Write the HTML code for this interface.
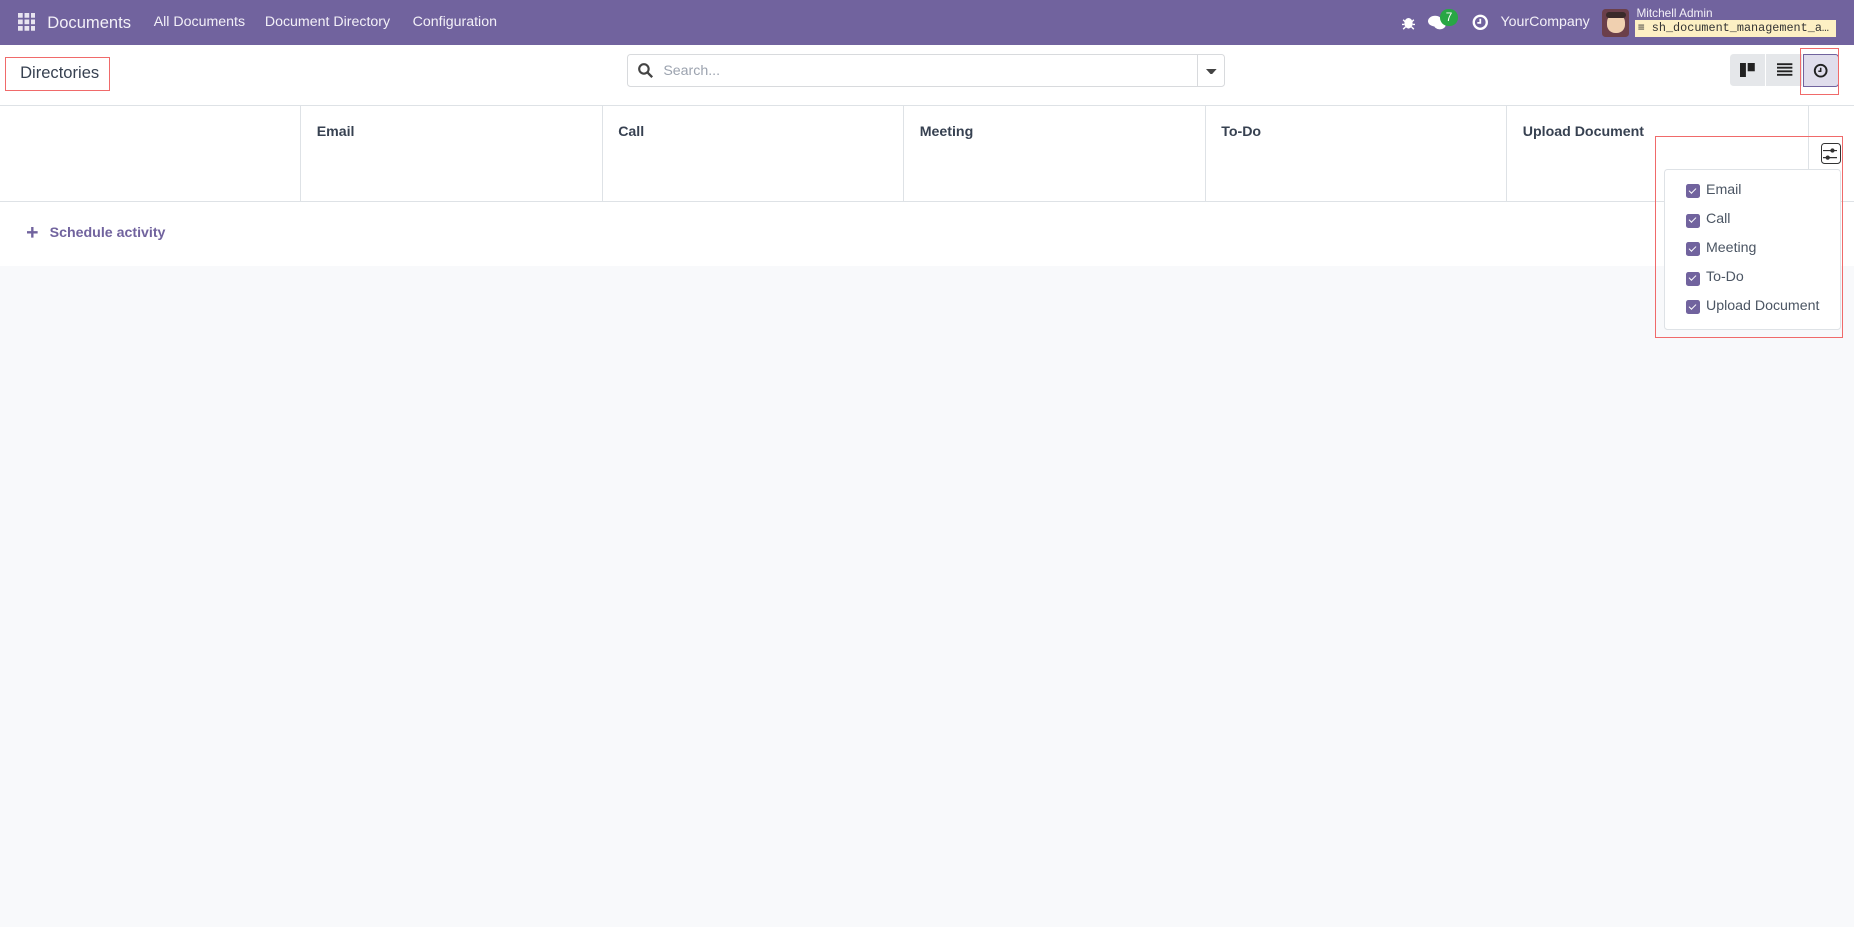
<!DOCTYPE html>
<html><head><meta charset="utf-8"><style>
html,body{margin:0;padding:0;}
body{width:1568px;height:784px;zoom:1.18240;background:#f8f9fb;font-family:"Liberation Sans",sans-serif;font-size:12px;color:#374151;position:relative;overflow:hidden}
.nav{position:absolute;left:0;top:0;width:1568px;height:38px;background:#71639e;color:#fff}
.nav span{position:absolute;top:12px;font-size:12px;color:#f3f0f8;white-space:nowrap}
.ctrl{position:absolute;left:0;top:38px;width:1568px;height:51px;background:#fff}
.abs{position:absolute}
.tbl{position:absolute;left:0;top:89px;width:1568px;height:80px;background:#fff;border-top:1px solid #dee2e6;border-bottom:1px solid #dee2e6}
.col{position:absolute;top:0;height:80px;border-left:1px solid #dee2e6}
.col b{position:absolute;left:13px;top:15px;font-weight:bold;font-size:12px;color:#374151}
.row2{position:absolute;left:0;top:171px;width:1568px;height:54px;background:#fff}
.cb{position:absolute;left:18px;width:12px;height:12px;border-radius:2px;background:#71639e}
.cb:after{content:"";position:absolute;left:3px;top:3px;width:5px;height:2.5px;border-left:1.5px solid #fff;border-bottom:1.5px solid #fff;transform:rotate(-45deg)}
.it{position:absolute;left:35px;font-size:12px;color:#4b5563}
</style></head><body>
<div class="nav">
  <svg class="abs" style="left:15px;top:11px" width="15" height="15"><g fill="#e8e4f0"><rect x="0" y="0" width="4" height="4"/><rect x="5.5" y="0" width="4" height="4"/><rect x="11" y="0" width="4" height="4"/><rect x="0" y="5.5" width="4" height="4"/><rect x="5.5" y="5.5" width="4" height="4"/><rect x="11" y="5.5" width="4" height="4"/><rect x="0" y="11" width="4" height="4"/><rect x="5.5" y="11" width="4" height="4"/><rect x="11" y="11" width="4" height="4"/></g></svg>
  <span style="left:40px;top:11px;font-size:14px">Documents</span>
  <span style="left:130px">All Documents</span>
  <span style="left:224px">Document Directory</span>
  <span style="left:349px">Configuration</span>
  <svg class="abs" style="left:1186px;top:13px" width="11" height="12"><ellipse cx="5.5" cy="7" rx="3.5" ry="4.5" fill="#fff"/><path d="M1 4l2 2M10 4l-2 2M0 8h2M9 8h2M1 12l2-2M10 12l-2-2" stroke="#fff" stroke-width="1.2"/></svg>
  <svg class="abs" style="left:1208px;top:12px" width="16" height="14"><ellipse cx="6" cy="6" rx="6" ry="4.5" fill="#fff"/><ellipse cx="10" cy="9" rx="5" ry="4" fill="#fff"/></svg>
  <div class="abs" style="left:1218px;top:8px;width:15px;height:14px;border-radius:7px;background:#28a745;color:#fff;font-size:10px;text-align:center;line-height:14px">7</div>
  <svg class="abs" style="left:1245px;top:12px" width="14" height="14"><circle cx="7" cy="7" r="5.5" fill="none" stroke="#fff" stroke-width="2"/><path d="M7 4v3.5h-2.5" stroke="#fff" stroke-width="1.5" fill="none"/></svg>
  <span style="left:1269px">YourCompany</span>
  <div class="abs" style="left:1355px;top:8px;width:23px;height:23px;border-radius:3px;background:#6b3f4a"><div style="position:absolute;left:4px;top:4px;width:15px;height:16px;border-radius:7px;background:#f0d0b0"></div><div style="position:absolute;left:3px;top:2px;width:17px;height:5px;background:#3a2a2a;border-radius:3px"></div></div>
  <span style="left:1384px;top:5px;font-size:10px">Mitchell Admin</span>
  <div class="abs" style="left:1383px;top:17px;width:170px;height:14px;background:#fdf0c4;color:#333;font-family:'Liberation Mono',monospace;font-size:10px;line-height:14px;padding-left:2px;box-sizing:border-box;white-space:nowrap;overflow:hidden">&#8801; sh_document_management_a…</div>
</div>
<div class="ctrl">
  <div class="abs" style="left:4px;top:10px;width:87px;height:27px;border:1px solid #f06a6a"></div>
  <div class="abs" style="left:17px;top:15px;font-size:14px;color:#374151">Directories</div>
  <div class="abs" style="left:530px;top:8px;width:506px;height:28px;border:1px solid #d8dadd;border-radius:3px;box-sizing:border-box"></div>
  <div class="abs" style="left:1012px;top:8px;width:1px;height:28px;background:#d8dadd"></div>
  <svg class="abs" style="left:540px;top:15px" width="13" height="13"><circle cx="5" cy="5" r="4" fill="none" stroke="#444" stroke-width="1.8"/><path d="M8 8l4 4" stroke="#444" stroke-width="2"/></svg>
  <div class="abs" style="left:561px;top:15px;color:#9ca3af;font-size:12px">Search...</div>
  <svg class="abs" style="left:1020px;top:20px" width="9" height="5"><path d="M0 0h9L4.5 5z" fill="#444"/></svg>
  <div class="abs" style="left:1463px;top:8px;width:61px;height:27px;background:#e5e7ea;border-radius:3px 0 0 3px"></div>
  <div class="abs" style="left:1493px;top:8px;width:1px;height:27px;background:#fff"></div>
  <svg class="abs" style="left:1472px;top:15px" width="13" height="12"><rect x="0" y="0" width="5" height="12" fill="#222"/><rect x="6.5" y="0" width="6" height="7" fill="#222"/></svg>
  <svg class="abs" style="left:1503px;top:15px" width="13" height="11"><path d="M0 1h13M0 4h13M0 7h13M0 10h13" stroke="#222" stroke-width="1.6"/></svg>
  <div class="abs" style="left:1525px;top:8px;width:29px;height:26px;background:#e0ddec;border:1px solid #71639e;border-radius:0 3px 3px 0"></div>
  <svg class="abs" style="left:1533px;top:15px" width="13" height="13"><circle cx="6.5" cy="6.5" r="5" fill="none" stroke="#222" stroke-width="1.6"/><path d="M6.5 4v3h-2" stroke="#222" stroke-width="1.3" fill="none"/></svg>
  <div class="abs" style="left:1522px;top:3px;width:32px;height:38px;border:1px solid #f06a6a"></div>
</div>
<div class="tbl">
  <div class="col" style="left:254px;width:255px"><b>Email</b></div>
  <div class="col" style="left:509px;width:255px"><b>Call</b></div>
  <div class="col" style="left:764px;width:255px"><b>Meeting</b></div>
  <div class="col" style="left:1019px;width:255px"><b>To-Do</b></div>
  <div class="col" style="left:1274px;width:255px"><b>Upload Document</b></div>
  <div class="col" style="left:1529px;width:39px"></div>
</div>
<div class="row2">
  <svg class="abs" style="left:23px;top:21px" width="9" height="9"><path d="M4.5 0v9M0 4.5h9" stroke="#71639e" stroke-width="2"/></svg>
  <div class="abs" style="left:42px;top:19px;color:#71639e;font-weight:bold;font-size:12px">Schedule activity</div>
</div>
<div class="abs" style="left:1540px;top:121px;width:15px;height:16px;border:1px solid #333;border-radius:3px;background:#fff"></div>
<svg class="abs" style="left:1542px;top:124px" width="12" height="12"><path d="M0 3h12M0 9h12" stroke="#333" stroke-width="1"/><circle cx="8" cy="3" r="1.8" fill="#333"/><circle cx="4" cy="9" r="1.8" fill="#333"/></svg>
<div class="abs" style="left:1407px;top:143px;width:150px;height:136px;background:#fff;border:1px solid #dee2e6;border-radius:3px;box-sizing:border-box">
  <div class="cb" style="top:12px"></div><div class="it" style="top:10px">Email</div>
  <div class="cb" style="top:37px"></div><div class="it" style="top:35px">Call</div>
  <div class="cb" style="top:61px"></div><div class="it" style="top:59px">Meeting</div>
  <div class="cb" style="top:86px"></div><div class="it" style="top:84px">To-Do</div>
  <div class="cb" style="top:110px"></div><div class="it" style="top:108px">Upload Document</div>
</div>
<div class="abs" style="left:1400px;top:115px;width:157px;height:169px;border:1px solid #f06a6a"></div>
</body></html>
